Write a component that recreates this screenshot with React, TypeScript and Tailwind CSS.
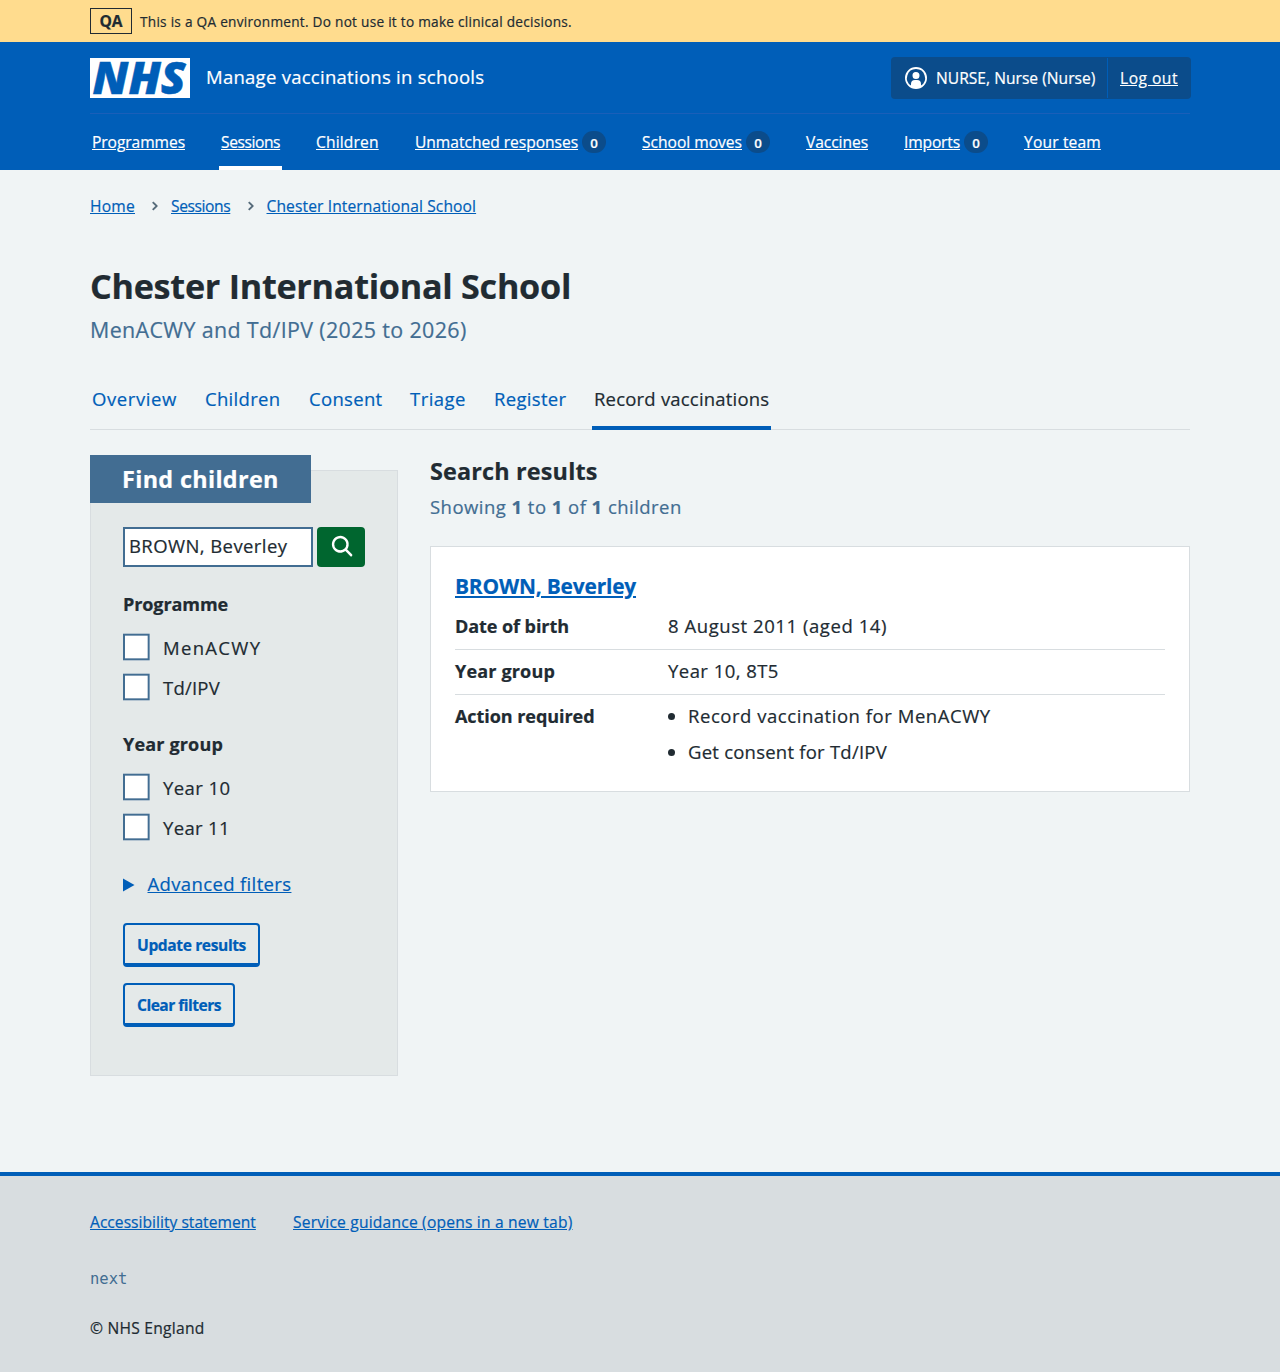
import type { ReactNode } from 'react';

const navItems: { label: string; tracking: string; width: string; count?: number; active?: boolean }[] = [
  { label: 'Programmes', tracking: 'tracking-[-0.07px]', width: 'w-[129px]' },
  { label: 'Sessions', tracking: 'tracking-[-0.42px]', width: 'w-[95px]', active: true },
  { label: 'Children', tracking: 'tracking-[0.15px]', width: 'w-[99px]' },
  { label: 'Unmatched responses', tracking: 'tracking-[-0.03px]', width: 'w-[227px]', count: 0 },
  { label: 'School moves', tracking: 'tracking-[-0.01px]', width: 'w-[164px]', count: 0 },
  { label: 'Vaccines', tracking: 'tracking-[-0.07px]', width: 'w-[98px]' },
  { label: 'Imports', tracking: 'tracking-[-0.15px]', width: 'w-[120px]', count: 0 },
  { label: 'Your team', tracking: 'tracking-[0.16px]', width: 'w-[81px]' },
];

const tabs: { label: string; tracking: string; width: string; active?: boolean }[] = [
  { label: 'Overview', tracking: 'tracking-[0.59px]', width: 'w-[113px]' },
  { label: 'Children', tracking: 'tracking-[0.31px]', width: 'w-[104px]' },
  { label: 'Consent', tracking: 'tracking-[0.31px]', width: 'w-[101px]' },
  { label: 'Triage', tracking: 'tracking-[0.47px]', width: 'w-[84px]' },
  { label: 'Register', tracking: 'tracking-[0.32px]', width: 'w-[100px]' },
  { label: 'Record vaccinations', tracking: 'tracking-[0.2px]', width: 'w-[179px]', active: true },
];

function Container({ children, className = '' }: { children: ReactNode; className?: string }) {
  return <div className={`mx-auto w-[1100px] ${className}`}>{children}</div>;
}

function NhsLogo() {
  return (
    <svg width="100" height="40" viewBox="0 0 100 40" className="block shrink-0" aria-label="NHS">
      <rect width="100" height="40" fill="#fff" />
      <text
        x="2.6"
        y="36.2"
        fontSize="44.6"
        textLength="93"
        lengthAdjust="spacingAndGlyphs"
        fill="#005eb8"
        stroke="#005eb8"
        strokeWidth="0.5"
        className="font-['Noto_Sans'] font-black italic"
      >
        NHS
      </text>
    </svg>
  );
}

function UserIcon() {
  return (
    <svg width="24" height="24" viewBox="0 0 24 24" fill="currentColor" className="shrink-0">
      <path d="M12 1a11 11 0 1 1 0 22 11 11 0 0 1 0-22Zm0 2a9 9 0 0 0-5 16.5V18a4 4 0 0 1 4-4h2a4 4 0 0 1 4 4v1.5A9 9 0 0 0 12 3Zm0 3a3.5 3.5 0 1 1-3.5 3.5A3.4 3.4 0 0 1 12 6Z" />
    </svg>
  );
}

function SearchIcon() {
  return (
    <svg width="29" height="29" viewBox="0 0 24 24" fill="currentColor" className="mb-[4px]">
      <path d="m20.7 19.3-4.1-4.1a7 7 0 1 0-1.4 1.4l4 4.1a1 1 0 0 0 1.5 0c.4-.4.4-1 0-1.4ZM6 11a5 5 0 1 1 10 0 5 5 0 0 1-10 0Z" />
    </svg>
  );
}

function Chevron() {
  return (
    <svg width="16" height="16" viewBox="0 0 24 24" fill="#4c6272" stroke="#4c6272" strokeWidth="0.9" className="shrink-0">
      <path d="M15.5 12a1 1 0 0 1-.29.71l-5 5a1 1 0 0 1-1.42-1.42l4.3-4.29-4.3-4.29a1 1 0 0 1 1.42-1.42l5 5a1 1 0 0 1 .29.71z" />
    </svg>
  );
}

function Checkbox({ label, tracking }: { label: string; tracking: string }) {
  return (
    <label className="flex h-10 items-center">
      <span className="block size-10 shrink-0 origin-left scale-[0.6667] border-[3px] border-[#426d92] bg-white" />
      <span className={`pt-0.5 ${tracking}`}>{label}</span>
    </label>
  );
}

export default function App() {
  return (
    <div className="flex min-h-[1372px] flex-col bg-[#f0f4f5] font-['Open_Sans',sans-serif] text-[18.5px] leading-7 text-[#212b32] [-webkit-text-stroke:0.2px]">
      <div className="h-[42px] bg-[#ffdc8e]">
        <Container className="flex h-full items-center gap-2">
          <strong className="flex h-[26px] w-[42px] items-center justify-center border border-[#212b32] text-[15.6px] leading-6 font-bold">
            QA
          </strong>
          <span className="pt-0.5 text-[13.65px] leading-5 tracking-[0.26px] whitespace-nowrap">
            This is a QA environment. Do not use it to make clinical decisions.
          </span>
        </Container>
      </div>

      <header className="h-32 bg-[#005eb8] text-white">
        <Container>
          <div className="flex h-[72px] items-center justify-between border-b border-[#1a5fb9]">
            <div className="flex items-center gap-4 pt-px">
              <NhsLogo />
              <span className="pb-0.5 tracking-[0.27px]">Manage vaccinations in schools</span>
            </div>
            <div className="-mr-px flex h-[42px] w-[300px] rounded bg-[#0b4c8b] text-[15.6px] leading-6 whitespace-nowrap">
              <div className="flex w-[216px] items-center gap-2 pl-[13px]">
                <UserIcon />
                <span className="tracking-[0.02px]">NURSE, Nurse (Nurse)</span>
              </div>
              <div className="my-px flex flex-1 items-center border-l border-[#005eb8] pl-3">
                <a className="tracking-[0.49px] underline underline-offset-1">Log out</a>
              </div>
            </div>
          </div>
          <nav className="flex h-14 text-[15.6px] leading-6 whitespace-nowrap">
            {navItems.map((item) => (
              <div key={item.label} className={`flex ${item.width}`}>
                <div
                  className={`flex h-full items-center gap-1 border-b-4 px-0.5 pt-1 ${item.active ? 'border-white' : 'border-transparent'}`}
                >
                  <a className={`underline underline-offset-1 ${item.tracking}`}>{item.label}</a>
                  {item.count !== undefined && (
                    <span className="flex h-[22px] w-6 items-center justify-center rounded-full bg-[#0b4c8b] pt-px text-[13.3px] font-semibold">
                      {item.count}
                    </span>
                  )}
                </div>
              </div>
            ))}
          </nav>
        </Container>
      </header>

      <Container className="flex-1">
        <div className="mt-6 flex h-6 items-center text-[15.6px] leading-6 whitespace-nowrap text-[#005eb8]">
          <a className="w-[45px] tracking-[0.23px] underline underline-offset-1">Home</a>
          <span className="flex w-9 justify-center pl-1">
            <Chevron />
          </span>
          <a className="w-[59.5px] tracking-[-0.4px] underline underline-offset-1">Sessions</a>
          <span className="flex w-9 justify-center pl-1">
            <Chevron />
          </span>
          <a className="tracking-[0.11px] underline underline-offset-1">Chester International School</a>
        </div>

        <h1 className="mt-[46px] text-[34.2px] leading-[44px] font-bold tracking-[-0.28px]">
          Chester International School
        </h1>
        <p className="mt-2 text-[21.45px] leading-7 tracking-[0.35px] text-[#426d92]">
          MenACWY and Td/IPV (2025 to 2026)
        </p>

        <nav className="mt-[26px] flex h-[60px] border-b border-[#d8dde0] whitespace-nowrap">
          {tabs.map((tab) => (
            <div key={tab.label} className={`flex h-[60px] ${tab.width}`}>
              <a
                className={`h-full border-b-4 px-0.5 pt-[15px] ${tab.tracking} ${
                  tab.active ? 'w-full border-[#005eb8] text-[#212b32]' : 'border-transparent text-[#005eb8]'
                }`}
              >
                {tab.label}
              </a>
            </div>
          ))}
        </nav>

        <div className="mt-[25px] flex gap-8">
          <aside className="mt-[15px] h-[606px] w-[308px] shrink-0 border border-[#d8dde0] bg-[#e4e9e9]">
            <h2 className="-mt-4 -ml-px flex h-12 w-[221px] items-center bg-[#426d92] pl-8 text-[23.4px] leading-8 font-bold tracking-[0.33px] text-white">
              Find children
            </h2>
            <div className="px-8">
              <div className="mt-6 flex gap-1">
                <div className="flex h-10 w-[190px] items-center border-2 border-[#426d92] bg-white px-1 pb-0.5 tracking-[0.41px] whitespace-nowrap">
                  BROWN, Beverley
                </div>
                <button className="flex h-10 w-12 items-center justify-center rounded bg-[#00662f] text-white">
                  <SearchIcon />
                </button>
              </div>

              <h3 className="mt-[23px] text-[18.05px] font-bold tracking-[-0.11px]">Programme</h3>
              <div className="mt-[9px]">
                <Checkbox label="MenACWY" tracking="tracking-[1.32px]" />
                <Checkbox label="Td/IPV" tracking="tracking-[0.22px]" />
              </div>

              <h3 className="mt-[23px] text-[18.05px] font-bold tracking-[0.15px]">Year group</h3>
              <div className="mt-[9px]">
                <Checkbox label="Year 10" tracking="tracking-[0.42px]" />
                <Checkbox label="Year 11" tracking="tracking-[0.34px]" />
              </div>

              <div className="mt-[23px] flex items-center text-[#005eb8]">
                <svg width="12" height="14" viewBox="0 0 12 14" fill="currentColor" className="mt-px mr-[12.5px]">
                  <path d="M0 .5v13L11.5 7Z" />
                </svg>
                <a className="tracking-[0.36px] underline underline-offset-1">Advanced filters</a>
              </div>

              <div className="mt-[25px] flex flex-col items-start gap-4 text-[15.6px] leading-6 font-bold text-[#005eb8]">
                <button className="flex h-11 w-[137px] items-center justify-center rounded border-2 border-b-4 border-[#005eb8] pt-0.5 tracking-[-0.4px] whitespace-nowrap">
                  Update results
                </button>
                <button className="flex h-11 w-28 items-center justify-center rounded border-2 border-b-4 border-[#005eb8] pt-0.5 tracking-[-0.53px] whitespace-nowrap">
                  Clear filters
                </button>
              </div>
            </div>
          </aside>

          <main className="flex-1">
            <h2 className="pt-px text-[23.4px] leading-[30px] font-bold tracking-[0.16px]">Search results</h2>
            <p className="mt-[7px] tracking-[0.46px] text-[#426d92]">
              Showing <b>1</b> to <b>1</b> of <b>1</b> children
            </p>

            <section className="mt-[25px] h-[246px] border border-[#d8dde0] bg-white px-6">
              <h3 className="mt-[25px] text-[20.9px] leading-7 font-bold tracking-[-0.18px] text-[#005eb8]">
                <a className="underline decoration-2 underline-offset-2">BROWN, Beverley</a>
              </h3>
              <dl className="mt-3">
                <div className="flex h-[38px] border-b border-[#d8dde0]">
                  <dt className="w-[213px] text-[18.05px] font-bold tracking-[-0.08px]">Date of birth</dt>
                  <dd className="tracking-[0.56px]">8 August 2011 (aged 14)</dd>
                </div>
                <div className="flex h-[45px] border-b border-[#d8dde0] pt-[7px]">
                  <dt className="w-[213px] text-[18.05px] font-bold tracking-[0.15px]">Year group</dt>
                  <dd className="tracking-[0.45px]">Year 10, 8T5</dd>
                </div>
                <div className="flex pt-[7px]">
                  <dt className="w-[213px] text-[18.05px] font-bold tracking-[-0.07px]">Action required</dt>
                  <dd>
                    <ul className="flex list-disc flex-col gap-2 pl-5">
                      <li className="tracking-[0.54px]">Record vaccination for MenACWY</li>
                      <li className="tracking-[0.23px]">Get consent for Td/IPV</li>
                    </ul>
                  </dd>
                </div>
              </dl>
            </section>
          </main>
        </div>
      </Container>

      <footer className="h-[200px] border-t-4 border-[#005eb8] bg-[#d8dde0] text-[15.6px] leading-6">
        <Container>
          <div className="flex gap-[37px] pt-[34px] whitespace-nowrap text-[#005eb8]">
            <a className="w-[166px] tracking-[0.02px] underline underline-offset-1">Accessibility statement</a>
            <a className="tracking-[0.2px] underline underline-offset-1">Service guidance (opens in a new tab)</a>
          </div>
          <p className="mt-[33px] font-['DejaVu_Sans_Mono',monospace] text-[15.5px] text-[#426d92] [-webkit-text-stroke:0]">
            next
          </p>
          <p className="mt-[25px] tracking-[0.25px]">© NHS England</p>
        </Container>
      </footer>
    </div>
  );
}
